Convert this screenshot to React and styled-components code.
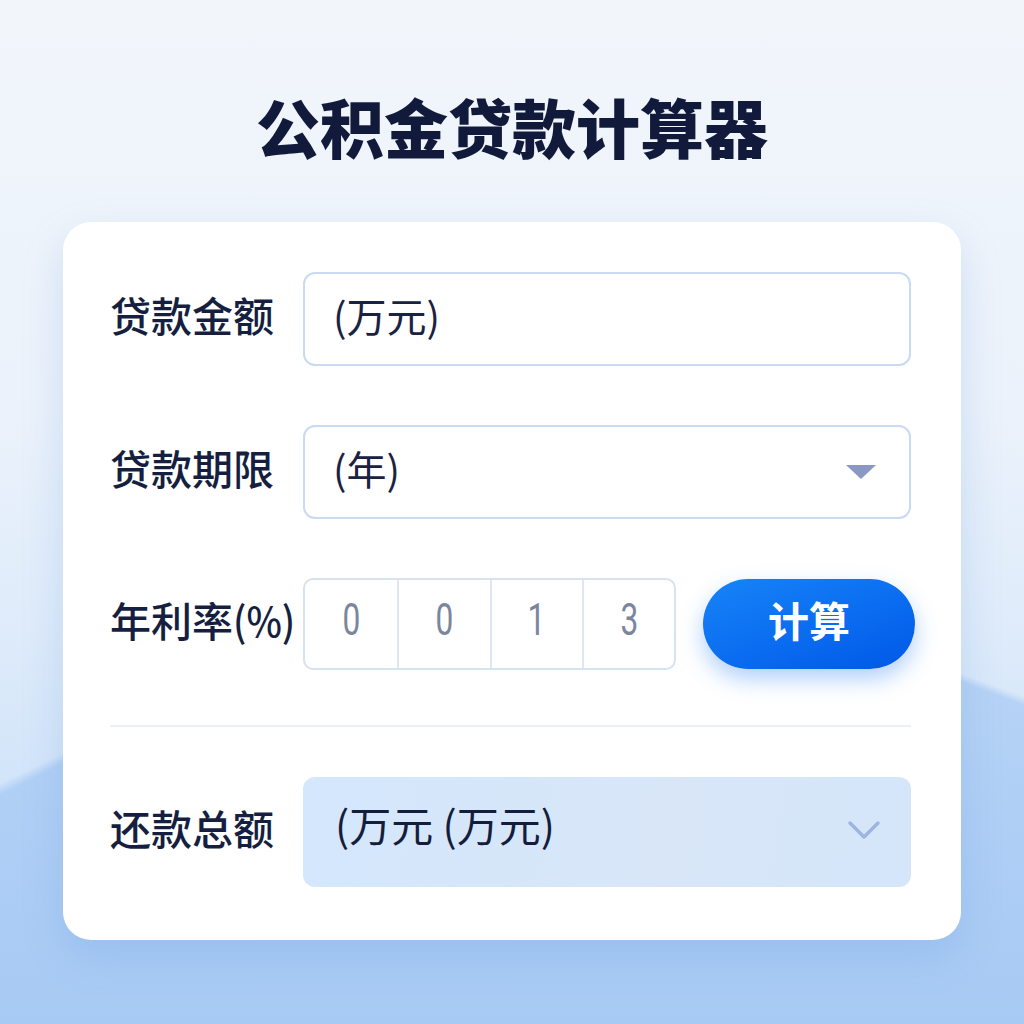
import React from "react";
import styled, { createGlobalStyle } from "styled-components";

const GlobalStyle = createGlobalStyle`
  html, body {
    margin: 0;
    padding: 0;
  }
  body {
    font-family: "Noto Sans CJK SC", "Noto Sans", sans-serif;
  }
`;

const digits = ["0", "0", "1", "3"];

function TriangleIcon() {
  return (
    <svg width="32" height="18" viewBox="0 0 32 18">
      <path d="M1 2 L31 2 L16 16 Z" fill="#8a98c4" />
    </svg>
  );
}

function ChevronIcon() {
  return (
    <svg width="34" height="22" viewBox="0 0 34 22">
      <path
        d="M3 4 L17 18 L31 4"
        fill="none"
        stroke="#9db5df"
        strokeWidth="3.5"
        strokeLinecap="round"
        strokeLinejoin="round"
      />
    </svg>
  );
}

export default function App() {
  return (
    <Page>
      <GlobalStyle />
      <Title>公积金贷款计算器</Title>
      <Card>
        <Row>
          <Label>贷款金额</Label>
          <Field>(万元)</Field>
        </Row>
        <Row>
          <Label>贷款期限</Label>
          <Field>
            (年)
            <TriangleIcon />
          </Field>
        </Row>
        <Row>
          <Label>
            年利率<Narrow>(%)</Narrow>
          </Label>
          <RateWrap>
            <DigitGroup>
              {digits.map((d, i) => (
                <DigitCell key={i}>
                  <Digit>{d}</Digit>
                </DigitCell>
              ))}
            </DigitGroup>
            <CalcButton>计算</CalcButton>
          </RateWrap>
        </Row>
        <Divider />
        <Row>
          <Label>还款总额</Label>
          <Result>
            (万元 (万元)
            <ChevronIcon />
          </Result>
        </Row>
      </Card>
    </Page>
  );
}

const Page = styled.div`
  min-height: 100vh;
  box-sizing: border-box;
  padding-top: 87px;
  display: flex;
  flex-direction: column;
  align-items: center;
  background:
    conic-gradient(
      from 0deg at 540px 520px,
      transparent 0deg 110deg,
      rgba(100, 160, 235, 0.3) 111deg 243deg,
      transparent 244deg
    ),
    linear-gradient(180deg, #f2f6fb 0%, #ebf2fb 40%, #deebfa 62%, #cfe3f9 80%, #c4dcf8 100%);
`;

const Title = styled.h1`
  margin: 0 0 59px;
  font-size: 64px;
  line-height: 76px;
  font-weight: 900;
  color: #121a3c;
`;

const Card = styled.div`
  width: 898px;
  box-sizing: border-box;
  padding: 50px 50px 53px 47px;
  background: #ffffff;
  border-radius: 28px;
  box-shadow: 0 16px 40px rgba(90, 145, 220, 0.22);
  display: flex;
  flex-direction: column;
  gap: 59px;
`;

const Row = styled.div`
  display: grid;
  grid-template-columns: 193px 608px;
  align-items: center;
`;

const Label = styled.div`
  font-size: 41px;
  font-weight: 500;
  color: #161f40;
  white-space: nowrap;
  padding-bottom: 10px;
`;

const Narrow = styled.span`
  display: inline-block;
  transform: scaleX(0.92);
  transform-origin: left center;
`;

const Field = styled.div`
  height: 94px;
  box-sizing: border-box;
  border: 2px solid #c9daf2;
  border-radius: 12px;
  background: #ffffff;
  padding: 0 32px 9px 28px;
  display: flex;
  align-items: center;
  justify-content: space-between;
  font-size: 40px;
  color: #1a2242;

  svg {
    margin-top: 9px;
  }
`;

const RateWrap = styled.div`
  display: flex;
  align-items: center;
  gap: 27px;
  margin-right: -4px;
`;

const DigitGroup = styled.div`
  width: 373px;
  height: 92px;
  box-sizing: border-box;
  border: 2px solid #d7e2f0;
  border-radius: 10px;
  display: grid;
  grid-template-columns: repeat(4, 1fr);
  overflow: hidden;
`;

const DigitCell = styled.div`
  display: flex;
  align-items: center;
  justify-content: center;
  padding-bottom: 8px;
  border-left: 2px solid #dfe6ef;
  &:first-child {
    border-left: none;
  }
`;

const Digit = styled.span`
  display: inline-block;
  font-family: "Roboto", "Liberation Sans", sans-serif;
  font-weight: 400;
  font-size: 44px;
  color: #7b869c;
  transform: scaleX(0.72);
`;

const CalcButton = styled.button`
  width: 212px;
  height: 90px;
  border: none;
  border-radius: 45px;
  padding: 0 0 10px;
  background: linear-gradient(160deg, #1784f7 0%, #0a6cf0 55%, #0058e6 100%);
  box-shadow: 0 10px 22px rgba(30, 120, 240, 0.35);
  color: #ffffff;
  font-family: "Noto Sans CJK SC", sans-serif;
  font-size: 41px;
  font-weight: 700;
  cursor: pointer;
`;

const Divider = styled.div`
  height: 2px;
  background: #eceff3;
  margin: -4px 0 -9px;
`;

const Result = styled.div`
  height: 110px;
  box-sizing: border-box;
  border-radius: 12px;
  background: linear-gradient(100deg, #d4e7fc 0%, #d8e6f8 60%, #d5e6fa 100%);
  padding: 0 30px 18px 32px;
  display: flex;
  align-items: center;
  justify-content: space-between;
  font-size: 42px;
  color: #151d3c;

  svg {
    margin-top: 14px;
  }
`;
